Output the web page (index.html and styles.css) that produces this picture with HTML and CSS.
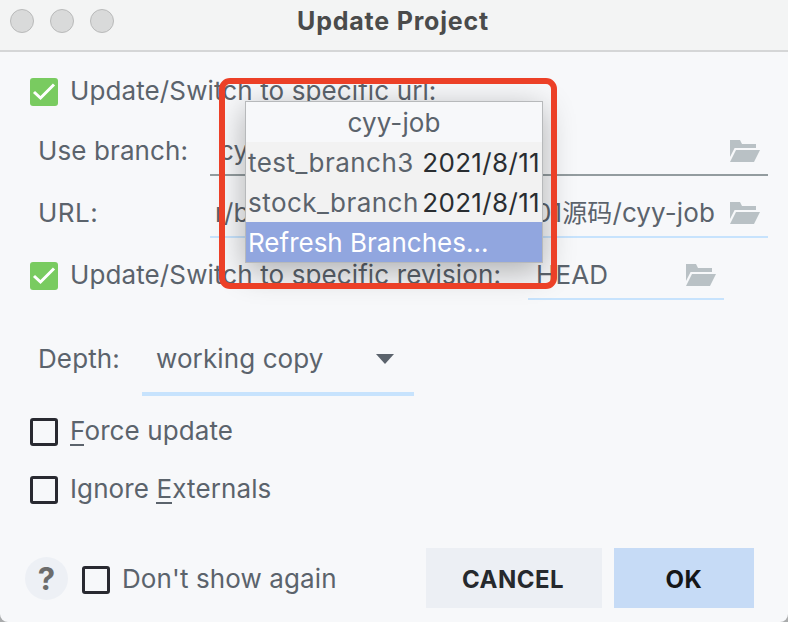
FILE: index.html
```html
<!DOCTYPE html>
<html lang="en">
<head>
    <meta charset="UTF-8">
    <meta name="viewport" content="width=device-width, initial-scale=1.0">
    <title>Update Project</title>
    <link rel="stylesheet" href="styles.css">
</head>
<body>
    <svg class="sprite">
        <symbol id="folder" viewBox="0 0 30 22">
            <path d="M0 0H10L12 4H26V8H4.600L0 17Z"/>
            <path d="M6 10H30L24 22H0Z"/>
        </symbol>
        <symbol id="check" viewBox="0 0 28 28">
            <path d="M4 14L10.500 20L24 6.500" fill="none" stroke="#fff" stroke-width="3"/>
        </symbol>
    </svg>

    <div class="dialog">
        <div class="titlebar">
            <div class="dots"><i></i><i></i><i></i></div>
            <h1>Update Project</h1>
        </div>

        <div class="content">
            <div class="row">
                <span class="checkbox checked"><svg><use href="#check"/></svg></span>
                <label>Update/Switch to specific url:</label>
            </div>
            <div class="row indent">
                <label class="name">Use branch:</label>
                <div class="field active">
                    <span class="value">cyy</span>
                    <svg class="folder"><use href="#folder"/></svg>
                </div>
            </div>
            <div class="row indent">
                <label class="name url">URL:</label>
                <div class="field path">
                    <span class="value">r/b</span>
                    <span class="value end">01<span class="cjk">源码</span>/cyy-job</span>
                    <svg class="folder"><use href="#folder"/></svg>
                </div>
            </div>
            <div class="row">
                <span class="checkbox checked"><svg><use href="#check"/></svg></span>
                <label>Update/Switch to specific revision:</label>
                <div class="field revision">
                    <span class="value">HEAD</span>
                    <svg class="folder"><use href="#folder"/></svg>
                </div>
            </div>
            <div class="row indent depth">
                <label>Depth:</label>
                <div class="combo">
                    <span class="value">working copy</span>
                    <span class="arrow"></span>
                </div>
            </div>
            <div class="row">
                <span class="checkbox"></span>
                <label class="force"><span class="key">F</span>orce update</label>
            </div>
            <div class="row last">
                <span class="checkbox"></span>
                <label class="ignore">Ignore <span class="key">E</span>xternals</label>
            </div>
        </div>

        <div class="footer">
            <span class="help">?</span>
            <span class="checkbox"></span>
            <label class="again">Don't show again</label>
            <button class="cancel">CANCEL</button>
            <button class="ok">OK</button>
        </div>

        <!-- Branch list, opened over the form -->
        <div class="popup">
            <div class="item current">cyy-job</div>
            <div class="item"><span class="branch">test_branch3</span><span class="date">2021/8/11</span></div>
            <div class="item"><span class="branch">stock_branch</span><span class="date">2021/8/11</span></div>
            <div class="item selected">Refresh Branches...</div>
        </div>
        <div class="highlight"></div>
    </div>
</body>
</html>
```

FILE: styles.css
```css
* {
    box-sizing: border-box;
}

body {
    margin: 0;
    background: #a9abac;
    font-family: Inter, "Noto Sans CJK SC", sans-serif;
    font-size: 26px;
    line-height: 32px;
    letter-spacing: 0.11px;
    color: #5b636c;
    overflow: hidden;
}

.sprite {
    display: none;
}

.dialog {
    position: relative;
    width: 788px;
    height: 622px;
    background: #f7f8fa;
    border-radius: 0 0 8px 8px;
    overflow: hidden;
}

.titlebar {
    display: grid;
    grid-template-columns: 1fr auto 1fr;
    height: 52px;
    padding: 0 12px 8px 10px;
    align-items: center;
    background: #f3f4f4;
    border-bottom: 2px solid #d5d6d7;
}

.dots {
    display: flex;
    gap: 16px;
}

.dots i {
    width: 24px;
    height: 24px;
    border: 1px solid #b9baba;
    border-radius: 50%;
    background: #d9dada;
}

h1 {
    margin: 0;
    font-size: 25px;
    font-weight: 700;
    letter-spacing: 0.8px;
    color: #4a4b4b;
}

.content {
    padding: 16px 20px 0 30px;
}

.row {
    display: flex;
    align-items: center;
    height: 48px;
    margin-top: 14px;
    white-space: nowrap;
}

.row:first-child {
    margin-top: 0;
}

.row:nth-child(2) {
    margin-top: 12px;
}

.indent {
    padding-left: 8px;
}

label {
    padding-bottom: 2px;
}

.name {
    width: 172px;
}

.url {
    letter-spacing: 0.5px;
}

.checkbox {
    flex: none;
    width: 28px;
    height: 28px;
    margin-right: 12px;
    border: 3px solid #292a31;
    border-radius: 3px;
}

.checkbox.checked {
    border: 0;
    background: #79cb60;
}

.checkbox svg {
    display: block;
    width: 28px;
    height: 28px;
}

.field {
    display: flex;
    flex: 1;
    align-items: center;
    height: 48px;
    padding: 0 8px;
    border-bottom: 2px solid #c7e3fd;
}

.field.active {
    padding-left: 9px;
    border-color: #939c9f;
}

.field.path {
    padding-left: 5px;
}

.value.end {
    margin-left: auto;
    margin-right: 15px;
}

.cjk {
    font-size: 25px;
}

.folder {
    width: 30px;
    height: 22px;
    margin-left: auto;
    fill: #b9c1c5;
}

.end + .folder {
    margin-left: 0;
}

.revision {
    flex: none;
    width: 196px;
    margin-left: auto;
    margin-right: 44px;
}

.depth {
    height: 72px;
    margin-top: 24px;
}

.depth label {
    width: 104px;
}

.combo {
    display: flex;
    justify-content: space-between;
    align-items: center;
    width: 272px;
    height: 72px;
    padding: 2px 20px 0 14px;
    border-bottom: 4px solid #c7e3fd;
}

.arrow {
    border: 9px solid transparent;
    border-top: 10px solid #5b636c;
    border-bottom: 0;
}

.depth + .row {
    margin-top: 12px;
}

.row.last {
    margin-top: 10px;
}

.key {
    box-shadow: 0 -2px 0 #5b636c inset;
}

.footer {
    display: flex;
    align-items: center;
    margin-top: 34px;
    padding: 0 34px 0 25px;
    height: 60px;
}

.footer .checkbox {
    margin-top: 4px;
}

.again {
    padding: 2px 0 0;
}

.help {
    width: 43px;
    height: 43px;
    margin-right: 14px;
    border-radius: 50%;
    background: #edf0f5;
    color: #6c6c6c;
    font-size: 31px;
    font-weight: 700;
    line-height: 43px;
    text-align: center;
}

button {
    height: 60px;
    padding: 3px 2px 0 0;
    border: 0;
    font: 700 24px Inter, sans-serif;
    letter-spacing: 0.5px;
}

.cancel {
    width: 176px;
    margin-left: auto;
    background: #eceff4;
    color: #26292d;
}

.ok {
    width: 140px;
    margin-left: 12px;
    padding-right: 0;
    background: #c6dbf6;
    color: #151617;
}

.popup {
    position: absolute;
    top: 101px;
    left: 245px;
    width: 298px;
    border: 1px solid #b7b9bb;
    background: #f2f2f2;
    box-shadow: 0 8px 30px rgba(0, 0, 0, 0.3);
}

.item {
    display: flex;
    justify-content: space-between;
    height: 40px;
    padding: 5px 2px 3px;
    white-space: nowrap;
}

.item.current {
    justify-content: center;
    background: #f7f8fa;
}

.item.selected {
    background: #91a6df;
    color: #fff;
    letter-spacing: 0;
}

.branch {
    letter-spacing: 0.45px;
}

.date {
    letter-spacing: 0.35px;
    color: #292d31;
}

/* red frame around the branch list */
.highlight {
    position: absolute;
    top: 78px;
    left: 219px;
    width: 338px;
    height: 211px;
    border: 6px solid #ec4027;
    border-radius: 11px;
}
```
